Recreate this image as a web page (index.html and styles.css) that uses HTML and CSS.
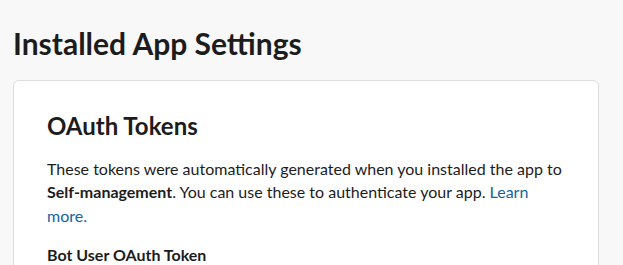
FILE: index.html
```html
<!DOCTYPE html>
<html lang="en">
<head>
  <meta charset="UTF-8">
  <meta name="viewport" content="width=device-width, initial-scale=1">
  <title>Installed App Settings</title>
  <link rel="stylesheet" href="styles.css">
</head>
<body>

  <div class="page">
    <h1 class="page-title">Installed App Settings</h1>

    <!-- OAuth tokens card -->
    <div class="card">
      <h2 class="card-title">OAuth Tokens</h2>
      <p class="card-text">
        These tokens were automatically generated when you installed the app to
        <strong>Self-management</strong>. You can use these to authenticate your app.
        <a href="#">Learn more.</a>
      </p>
      <div class="field-label">Bot User OAuth Token</div>
    </div>
  </div>

</body>
</html>
```

FILE: styles.css
```css
* {
  box-sizing: border-box;
}

body {
  margin: 0;
  font-family: Lato, 'Noto Sans', sans-serif;
  background: #f8f8f8;
  color: #1d1c1d;
  overflow: hidden;
}

.page {
  padding: 23px 24px 0 13px;
}

.page-title {
  margin: 0 0 17px;
  font-size: 30px;
  line-height: 40px;
  font-weight: 700;
}

/* Card */
.card {
  background: #ffffff;
  border: 1px solid #dddddd;
  border-radius: 6px;
  padding: 31px 33px 40px;
}

.card-title {
  margin: 0 0 16px;
  font-size: 24px;
  line-height: 1.2;
  font-weight: 700;
}

.card-text {
  margin: 0 0 16px;
  font-size: 16px;
  line-height: 23.5px;
}

.card-text strong {
  font-weight: 700;
}

.card-text a {
  color: #1264a3;
  text-decoration: none;
}

.field-label {
  font-size: 16px;
  line-height: 23.5px;
  font-weight: 700;
}
```
